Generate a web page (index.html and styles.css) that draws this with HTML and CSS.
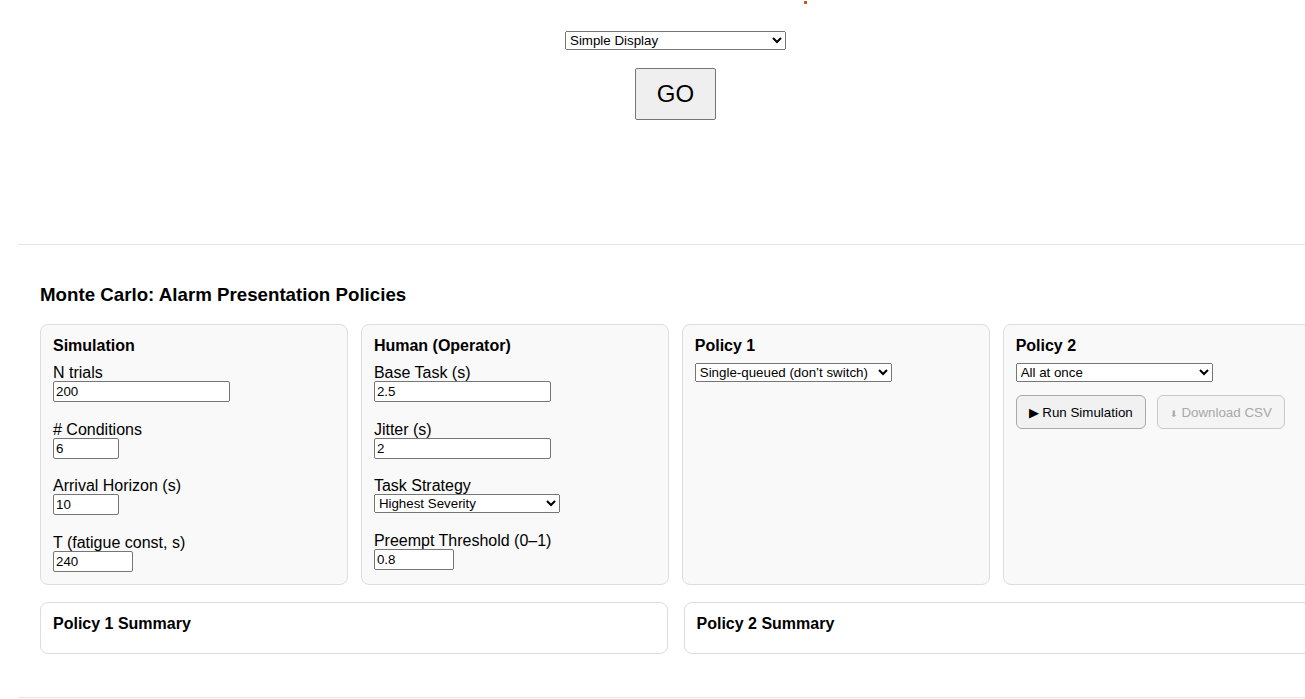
FILE: index.html
```html
<!DOCTYPE html>
<html>
<head>
<meta charset="utf-8">
<title>Monte Carlo: Alarm Presentation Policies</title>
<link rel="stylesheet" href="styles.css">
</head>
<body>
<span class="dot"></span>
<div class="page">
  <div class="top">
    <select class="display-select">
      <option>Simple Display</option>
      <option>Advanced Display</option>
    </select>
    <button class="go">GO</button>
  </div>
  <hr class="rule">
  <section class="sim">
    <h3 class="sim-title">Monte Carlo: Alarm Presentation Policies</h3>
    <div class="cards">
      <div class="card">
        <h4 class="card-title">Simulation</h4>
        <div class="field"><label>N trials</label><input class="w177" type="text" value="200"></div>
        <div class="field"><label># Conditions</label><input class="w66" type="text" value="6"></div>
        <div class="field"><label>Arrival Horizon (s)</label><input class="w66" type="text" value="10"></div>
        <div class="field last"><label>T (fatigue const, s)</label><input class="w80" type="text" value="240"></div>
      </div>
      <div class="card">
        <h4 class="card-title">Human (Operator)</h4>
        <div class="field"><label>Base Task (s)</label><input class="w177" type="text" value="2.5"></div>
        <div class="field"><label>Jitter (s)</label><input class="w177" type="text" value="2"></div>
        <div class="field"><label>Task Strategy</label>
          <select class="sel186"><option>Highest Severity</option><option>First In First Out</option></select>
        </div>
        <div class="field last"><label>Preempt Threshold (0–1)</label><input class="w80" type="text" value="0.8"></div>
      </div>
      <div class="card">
        <h4 class="card-title">Policy 1</h4>
        <select class="sel196"><option>Single-queued (don’t switch)</option><option>All at once</option></select>
      </div>
      <div class="card">
        <h4 class="card-title">Policy 2</h4>
        <select class="sel196"><option>All at once</option><option>Single-queued (don’t switch)</option></select>
        <div class="actions">
          <button class="btn">▶ Run Simulation</button>
          <button class="btn" disabled><span class="arr">⬇</span> Download CSV</button>
        </div>
      </div>
    </div>
    <div class="summaries">
      <div class="summary"><h4 class="card-title">Policy 1 Summary</h4><div class="summary-body"></div></div>
      <div class="summary"><h4 class="card-title">Policy 2 Summary</h4><div class="summary-body"></div></div>
    </div>
  </section>
  <hr class="rule bottom">
</div>
</body>
</html>
```

FILE: styles.css
```css
html, body {
  margin: 0;
  padding: 0;
  background: #ffffff;
}
body {
  font-family: "Liberation Sans", Arial, sans-serif;
  color: #000;
  overflow: hidden;
}
.dot {
  position: absolute;
  left: 804px;
  top: 1px;
  width: 3px;
  height: 3px;
  background: #c65a1e;
}
.page {
  margin-left: 18px;
  width: 1315px;
}
.top {
  display: flex;
  flex-direction: column;
  align-items: center;
  padding-top: 31px;
  height: 89px;
  margin-bottom: 124px;
}
.display-select {
  width: 221px;
  height: 19px;
  font-family: "Liberation Sans", Arial, sans-serif;
  font-size: 13.33px;
}
.go {
  margin-top: 18px;
  width: 81px;
  height: 52px;
  font-family: "Liberation Sans", Arial, sans-serif;
  font-size: 24px;
  background: #efefef;
  border: 1px solid #767676;
  border-radius: 2px;
  color: #000;
}
.rule {
  margin: 0;
  border: 0;
  border-top: 1px solid #e6e6e6;
}
.rule.bottom {
  margin-top: 43px;
}
.sim {
  padding: 20px 22px 0 22px;
}
.sim-title {
  font-size: 18.72px;
  font-weight: bold;
  margin: 18.72px 0;
  line-height: 21.5px;
}
.cards {
  display: grid;
  grid-template-columns: repeat(4, 1fr);
  column-gap: 12.5px;
}
.card {
  background: #f9f9f9;
  border: 1px solid #dddddd;
  border-radius: 8px;
  padding: 12px;
}
.card-title {
  font-size: 16px;
  font-weight: bold;
  margin: 0 0 8px 0;
  line-height: 18.4px;
}
.field {
  margin-bottom: 17.5px;
}
.field.last {
  margin-bottom: 0;
}
.field label {
  display: block;
  font-size: 16px;
  line-height: 18px;
  position: relative;
  top: 1px;
}
.field input {
  display: block;
  box-sizing: border-box;
  height: 21px;
  font-family: "Liberation Sans", Arial, sans-serif;
  font-size: 13.33px;
  padding: 1px 2px;
  border: 1px solid #767676;
  border-radius: 2px;
  background: #fff;
  margin: 0;
}
.w177 { width: 177px; }
.w66 { width: 66px; }
.w80 { width: 80px; }
select {
  font-family: "Liberation Sans", Arial, sans-serif;
  font-size: 13.33px;
  height: 19px;
  display: block;
  margin: 0;
}
.sel186 { width: 186px; }
.sel196 { width: 197px; }
.actions {
  display: flex;
  gap: 11px;
  margin-top: 13px;
}
.btn {
  font-family: "Liberation Sans", Arial, sans-serif;
  font-size: 13.33px;
  height: 34px;
  padding: 0 12px;
  background: #f1f1f1;
  border: 1px solid #a8a8a8;
  border-radius: 6px;
  color: #000;
}
.btn:disabled {
  color: #a8a8a8;
  border-color: #c8c8c8;
  background: #f4f4f4;
}
.arr {
  font-size: 9px;
}
.summaries {
  display: grid;
  grid-template-columns: 1fr 1fr;
  gap: 16px;
  margin-top: 17px;
}
.summary {
  background: #ffffff;
  border: 1px solid #dddddd;
  border-radius: 8px;
  padding: 12px;
  height: 26px;
}
.summary-body {
  min-height: 1px;
}
```
